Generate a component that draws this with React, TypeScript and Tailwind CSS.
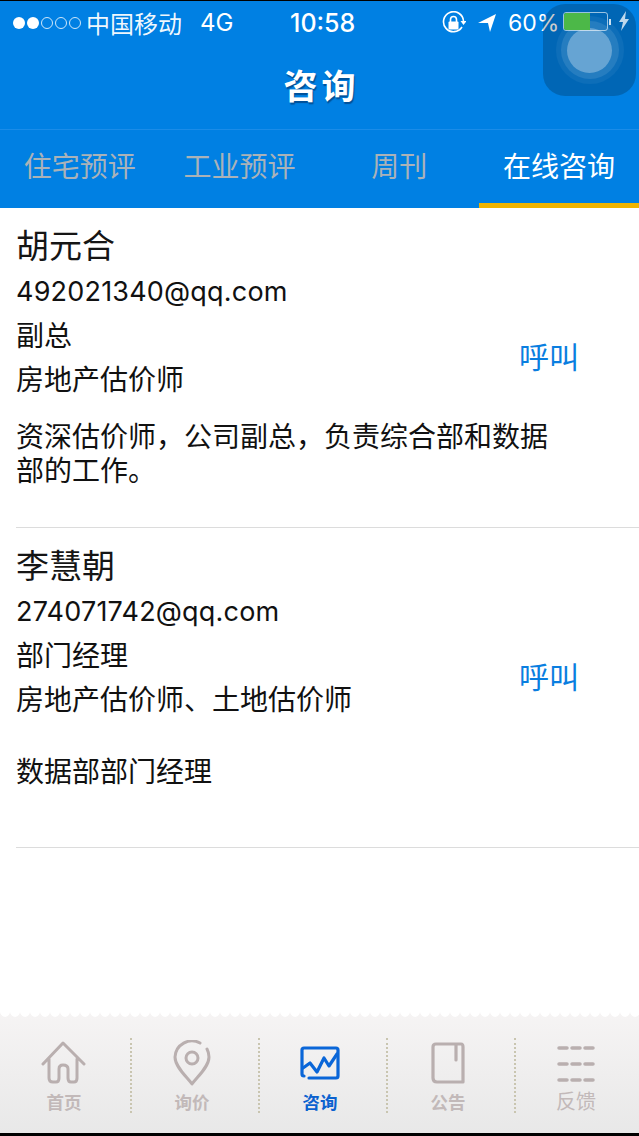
import React from "react";

const CJK = '"Noto Sans CJK SC", "Liberation Sans", sans-serif';

function Person({ name, mail, role, title, desc }: { name: string; mail: string; role: string; title: string; desc: React.ReactNode }) {
  return (
    <div className="relative h-[320px] border-b border-[#dcdcdc] ml-4 text-[#111]">
      <div className="pt-[16px]">
        <div className="text-[33px] leading-[40px] text-[#151515]">{name}</div>
        <div className="text-[27px] leading-[32px] mt-[12px] tracking-[0.2px] [font-family:Inter,sans-serif]">{mail}</div>
        <div className="text-[28px] leading-[44px] mt-[4px]">{role}</div>
        <div className="text-[28px] leading-[44px]">{title}</div>
        <div className="text-[28px] leading-[34px] mt-[18px] w-[540px]">{desc}</div>
      </div>
      <div className="absolute left-[503px] top-[127px] text-[30px] leading-[40px] text-[#0a7ee0]">呼叫</div>
    </div>
  );
}

function Tab({ icon, label, active, up, sep }: { icon: React.ReactNode; label: string; active?: boolean; up?: boolean; sep?: boolean }) {
  return (
    <div className="relative flex-none w-[128px] flex flex-col items-center">
      <div className="h-[50px] flex items-center justify-center">{icon}</div>
      <div className={`leading-[24px] ${active ? "text-[#0b62cf]" : "text-[#c2b9b9]"} ${up ? "mt-[1px] text-[20px] font-normal" : "mt-[2px] text-[17.5px] font-bold"}`}>{label}</div>
      {sep && <div className="absolute right-[-4px] top-0 w-0 h-[75px] border-l-2 border-dotted border-[#c9c5b0]" />}
    </div>
  );
}

export default function App() {
  return (
    <div className="w-[639px] h-[1136px] bg-white flex flex-col relative overflow-hidden" style={{ fontFamily: CJK }}>
      <div className="h-[1px] bg-black" />
      <div className="bg-[#0080e3] h-[207px] flex flex-col text-white">
        <div className="h-[43px] flex items-center relative">
          <div className="flex items-center gap-[2px] pl-[13px]">
            {[1, 1, 0, 0, 0].map((f, i) => (
              <div key={i} className={`w-[12px] h-[12px] rounded-full ${f ? "bg-white" : "border border-white/80"}`} />
            ))}
          </div>
          <span className="ml-[5px] text-[24px] leading-[30px] text-white/95">中国移动</span>
          <span className="ml-[18px] text-[24px] leading-[30px] [font-family:Inter,sans-serif]">4G</span>
          <span className="absolute left-[290px] text-[25px] leading-[30px] font-medium [font-family:Inter,sans-serif]">10:58</span>
          <svg className="absolute left-[442px] top-[10px]" width="24" height="24" viewBox="0 0 24 24" fill="none">
            <path d="M20 16A10 10 0 1 1 21.5 10" stroke="#fff" strokeWidth="1.6" />
            <path d="M18.5 10h6l-3 4z" fill="#fff" />
            <rect x="6.5" y="10.5" width="10" height="8" rx="1" fill="#fff" />
            <path d="M8.5 11V8.500a3 3 0 0 1 6 0V11" stroke="#fff" strokeWidth="1.600" />
          </svg>
          <svg className="absolute left-[477px] top-[12px]" width="20" height="20" viewBox="0 0 20 20">
            <path d="M1 10L19 1L13 19L11 10z" fill="#fff" />
          </svg>
          <span className="absolute left-[508px] text-[23px] leading-[30px] [font-family:Inter,sans-serif]">60%</span>
        </div>
        <div className="h-[86px] flex items-center justify-center border-b border-[#1b8ce8]">
          <span className="text-[34px] leading-[40px] font-bold tracking-[4px] pl-[4px] [text-shadow:1px_2px_1px_rgba(0,60,120,0.7)] pb-[3px]">咨询</span>
        </div>
        <div className="flex-1 flex">
          {["住宅预评", "工业预评", "周刊", "在线咨询"].map((t, i) => (
            <div key={t} className={`w-[160px] flex justify-center pt-[15px] text-[28px] leading-[40px] ${i === 3 ? "text-white border-b-[5px] border-[#f0b400]" : "text-[#aab2b8]"}`}>{t}</div>
          ))}
        </div>
      </div>

      <Person
        name="胡元合"
        mail="492021340@qq.com"
        role="副总"
        title="房地产估价师"
        desc="资深估价师，公司副总，负责综合部和数据部的工作。"
      />
      <Person
        name="李慧朝"
        mail="274071742@qq.com"
        role="部门经理"
        title="房地产估价师、土地估价师"
        desc={<div className="pt-[15px]">数据部部门经理</div>}
      />

      <div className="absolute left-0 right-0 bottom-[1px] h-[123px] flex bg-gradient-to-b from-[#f6f4f4] to-[#e8e8e8] pt-[26px]">
        <div className="absolute left-0 right-0 top-0 h-[5px] bg-[radial-gradient(circle_at_5px_0,#ffffff_4.500px,transparent_5px)] bg-[length:10px_5px]" />
        <Tab
          sep
          label="首页"
          icon={
            <svg width="46" height="44" viewBox="0 0 46 44" fill="none" stroke="#b9afaf" strokeWidth="3" strokeLinecap="round" strokeLinejoin="round">
              <path d="M2 23L22 2L43 23M8 18V37Q8 41 12 41H15Q18 41 18 37V28Q18 24 22 24Q27 24 27 28V37Q27 41 30 41H33Q36 41 36 37V18" />
            </svg>
          }
        />
        <Tab
          sep
          label="询价"
          icon={
            <svg width="38" height="46" viewBox="0 0 38 46" fill="none" stroke="#b9afaf" strokeWidth="3" strokeLinecap="round" strokeLinejoin="round">
              <path d="M27 3A17 17 0 0 0 2 17C2 27 14 37 19 44C24 37 36 27 36 17A17 17 0 0 0 34 9" />
              <circle cx="19" cy="18" r="6" />
            </svg>
          }
        />
        <Tab
          sep
          active
          label="咨询"
          icon={
            <svg width="40" height="34" viewBox="0 0 40 34" fill="none" stroke="#0a66d8" strokeWidth="3.200" strokeLinejoin="round" strokeLinecap="round">
              <path d="M9 32H36Q38 32 38 30V4Q38 2 36 2H4Q2 2 2 4V28Q2 30 4 30" />
              <path d="M3 22L10 17L17 26L24 12L29 20L37 8" />
            </svg>
          }
        />
        <Tab
          sep
          label="公告"
          icon={
            <svg width="34" height="42" viewBox="0 0 34 42" fill="none" stroke="#b9afaf" strokeWidth="3.200" strokeLinecap="round">
              <path d="M32 40H6Q2 40 2 36V5Q2 2 5 2H30Q32 2 32 5V40" />
              <path d="M25 3V18" />
            </svg>
          }
        />
        <Tab
          up
          label="反馈"
          icon={
            <svg width="38" height="38" viewBox="0 0 38 38" stroke="#b9afaf" strokeWidth="3.500" strokeLinecap="round">
              <path d="M2 4H10M15 4H23M28 4H36M2 20H10M15 20H23M28 20H36M2 36H10M15 36H23M28 36H36" />
            </svg>
          }
        />
      </div>
      <div className="absolute left-0 right-0 bottom-0 h-[3px] bg-black" />

      <div className="absolute left-[543px] top-[4px] w-[93px] h-[92px] rounded-[22px] bg-black/20 flex items-center justify-center">
        <div className="w-[68px] h-[68px] rounded-full bg-white/5 flex items-center justify-center">
          <div className="w-[58px] h-[58px] rounded-full bg-white/10 flex items-center justify-center">
            <div className="w-[45px] h-[45px] rounded-full bg-white/30" />
          </div>
        </div>
      </div>
      <div className="absolute left-[563px] top-[12px] w-[45px] h-[19px] rounded-[3px] border border-white/60 overflow-hidden">
        <div className="w-[26px] h-full bg-[#4cb848]" />
      </div>
      <div className="absolute left-[609px] top-[19px] w-[2px] h-[6px] bg-white/80" />
      <svg className="absolute left-[618px] top-[11px]" width="12" height="20" viewBox="0 0 12 20">
        <path d="M8 0L1 11H5L3 20L11 8H7z" fill="#ffffff" fillOpacity="0.75" />
      </svg>
    </div>
  );
}
